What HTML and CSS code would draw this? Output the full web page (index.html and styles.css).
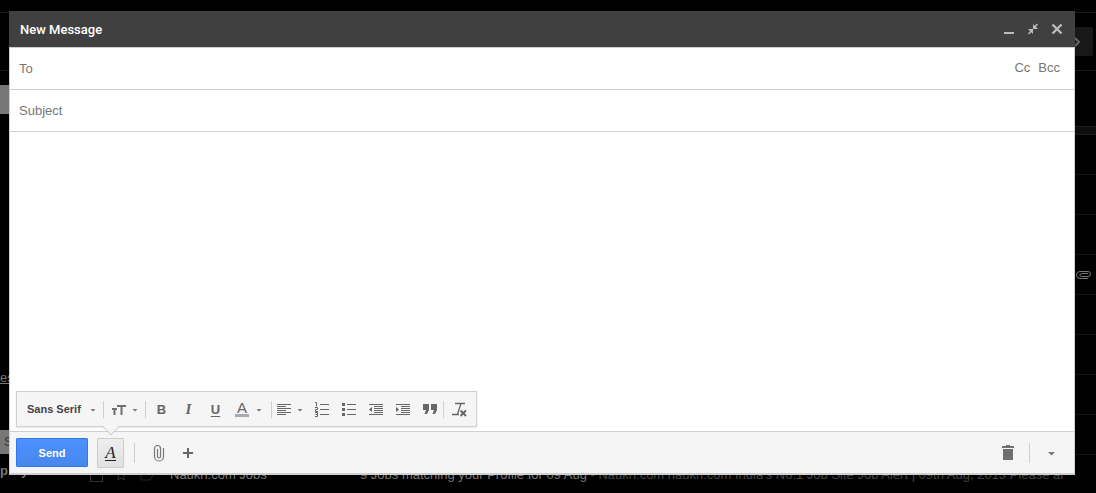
FILE: index.html
```html
<!DOCTYPE html>
<html lang="en">
<head>
    <meta charset="UTF-8">
    <meta name="viewport" content="width=device-width, initial-scale=1.0">
    <title>New Message</title>
    <link rel="stylesheet" href="styles.css">
</head>
<body>

    <!-- Dimmed mailbox behind the dialog -->
    <div class="mailbox" aria-hidden="true">
        <div class="mailbox-bar">
            <span class="pager">
                <svg width="6" height="10" viewBox="0 0 6 10"><path d="M1 1l4 4-4 4" fill="none" stroke="#666" stroke-width="2"/></svg>
            </span>
        </div>
        <div class="mailbox-main">
            <div class="nav">
                <div class="nav-compose"></div>
                <div class="nav-label">es</div>
                <div class="nav-search">S</div>
                <div class="nav-people"><span>p</span><span>y</span></div>
            </div>
            <div class="list">
                <div class="list-head"></div>
                <div class="mail"></div>
                <div class="mail"></div>
                <div class="mail"></div>
                <div class="mail has-file">
                    <svg width="16" height="10" viewBox="0 0 16 10"><path d="M12 8.500H4a3.500 3.500 0 010-7h8a2.500 2.500 0 010 5H5.500a1.500 1.500 0 010-3H12" fill="none" stroke="#777"/></svg>
                </div>
                <div class="mail"></div>
                <div class="mail"></div>
                <div class="mail"></div>
                <div class="mail"></div>
                <div class="mail">
                    <span class="mail-tick"></span>
                    <svg class="mail-star" width="12" height="12" viewBox="0 0 12 12"><path d="M6 1l1.500 3.500 3.500.3-2.700 2.300.9 3.900L6 9l-3.200 2 .9-3.900L1 4.800l3.500-.3z" fill="none" stroke="#333"/></svg>
                    <svg class="mail-flag" width="14" height="12" viewBox="0 0 14 12"><path d="M1 1h9l3 5-3 5H1z" fill="none" stroke="#222"/></svg>
                    <span class="mail-from">Naukri.com Jobs</span>
                    <span class="mail-text"><span class="mail-subject">9 Jobs matching your Profile for 09 Aug</span> - Naukri.com naukri.com India's No.1 Job Site Job Alert | 09th Aug, 2013 Please al</span>
                </div>
            </div>
        </div>
    </div>

    <!-- Compose dialog -->
    <form class="compose">
        <div class="title-bar">
            <h1>New Message</h1>
            <button type="button" class="window-btn" aria-label="Minimize">
                <svg width="12" height="12" viewBox="0 0 12 12"><path d="M1 9h10v2H1z" fill="#bbb"/></svg>
            </button>
            <button type="button" class="window-btn" aria-label="Exit full-screen">
                <svg width="12" height="12" viewBox="0 0 12 12"><path d="M6 1l1.700 1.700L10 .5l1 1-2.200 2.300L11 6H6zM6 11l-1.700-1.700L2 11.500l-1-1 2.200-2.300L1 6h5z" fill="#bbb"/></svg>
            </button>
            <button type="button" class="window-btn" aria-label="Close">
                <svg width="12" height="12" viewBox="0 0 12 12"><path d="M1.500 1.500l9 9M10.500 1.500l-9 9" stroke="#bbb" stroke-width="2.400"/></svg>
            </button>
        </div>

        <div class="content">
            <div class="field">
                <input type="text" placeholder="To" aria-label="To">
                <button type="button" class="copy-btn">Cc</button>
                <button type="button" class="copy-btn">Bcc</button>
            </div>
            <div class="field">
                <input type="text" placeholder="Subject" aria-label="Subject">
            </div>

            <textarea class="message" aria-label="Message body"></textarea>

            <!-- Formatting options -->
            <div class="format-bar">
                <div class="font-pick">
                    <select aria-label="Font">
                        <option>Sans Serif</option>
                    </select>
                    <span class="caret"></span>
                </div>
                <span class="divider"></span>
                <button type="button" class="tool menu" aria-label="Size">
                    <svg width="16" height="16" viewBox="0 0 16 16"><path d="M1 7h5v2H4.500v5h-2V9H1zM6 4h9v2h-3.500v8h-2V6H6z" fill="#707070"/></svg>
                    <span class="caret"></span>
                </button>
                <span class="divider"></span>
                <button type="button" class="tool bold">B</button>
                <button type="button" class="tool italic">I</button>
                <button type="button" class="tool underline">U</button>
                <button type="button" class="tool menu color" aria-label="Text color">
                    <span class="color-letter">A</span>
                    <span class="caret"></span>
                </button>
                <span class="divider"></span>
                <button type="button" class="tool menu align" aria-label="Align">
                    <svg width="16" height="16" viewBox="0 0 16 16"><path d="M1 3h14v1H1zM1 5h9v1H1zM1 7h14v1H1zM1 9h9v1H1zM1 11h14v1H1zM1 13h9v1H1z" fill="#666"/></svg>
                    <span class="caret"></span>
                </button>
                <button type="button" class="tool" aria-label="Numbered list">
                    <svg width="16" height="16" viewBox="0 0 16 16">
                        <path d="M6 3h9v1H6zM6 8h9v1H6zM6 13h9v1H6z" fill="#666"/>
                        <path d="M1 1.500h1.500v4M1 6.500h2.500v2H1.500v2H4M1 11.500h2.500v4H1M1.500 13.500h2" fill="none" stroke="#666"/>
                    </svg>
                </button>
                <button type="button" class="tool" aria-label="Bulleted list">
                    <svg width="16" height="16" viewBox="0 0 16 16"><path d="M6 3h9v1H6zM6 8h9v1H6zM6 13h9v1H6zM1 2h3v3H1zM1 7h3v3H1zM1 12h3v3H1z" fill="#666"/></svg>
                </button>
                <button type="button" class="tool" aria-label="Indent less">
                    <svg width="16" height="16" viewBox="0 0 16 16"><path d="M1 3h14v1H1zM6 5h9v1H6zM6 7h9v1H6zM6 9h9v1H6zM6 11h9v1H6zM1 13h14v1H1zM4 6v5L1 8.500z" fill="#666"/></svg>
                </button>
                <button type="button" class="tool" aria-label="Indent more">
                    <svg width="16" height="16" viewBox="0 0 16 16"><path d="M1 3h14v1H1zM6 5h9v1H6zM6 7h9v1H6zM6 9h9v1H6zM6 11h9v1H6zM1 13h14v1H1zM1 6v5l3-2.500z" fill="#666"/></svg>
                </button>
                <button type="button" class="tool" aria-label="Quote">
                    <svg width="16" height="16" viewBox="0 0 16 16"><path d="M1 3h6v6l-2 4H2.500L4 9H1zM9 3h6v6l-2 4h-2.500L12 9H9z" fill="#666"/></svg>
                </button>
                <span class="divider"></span>
                <button type="button" class="tool clear" aria-label="Remove formatting">
                    <svg width="16" height="16" viewBox="0 0 16 16"><path d="M3 2.500h10M9 2.500L5.500 13M0 13.500h7" fill="none" stroke="#666" stroke-width="1.300"/><path d="M8.500 9.500l5.500 5.500M14 9.500l-5.500 5.500" stroke="#666" stroke-width="1.800"/></svg>
                </button>
            </div>

            <div class="actions">
                <button type="button" class="send">Send</button>
                <button type="button" class="format-toggle" aria-label="Formatting options"><span>A</span></button>
                <span class="divider"></span>
                <button type="button" class="tool" aria-label="Attach files">
                    <svg width="12" height="18" viewBox="0 0 12 18"><path d="M10.500 4v8.500a4.500 4.500 0 01-9 0V4.500a3 3 0 016 0v8a1.500 1.500 0 01-3 0V5" fill="none" stroke="#777" stroke-width="1.200"/></svg>
                </button>
                <button type="button" class="tool" aria-label="Insert">
                    <svg width="12" height="12" viewBox="0 0 12 12"><path d="M5 1h2v4h4v2H7v4H5V7H1V5h4z" fill="#666"/></svg>
                </button>
                <span class="spacer"></span>
                <button type="button" class="tool narrow" aria-label="Discard draft">
                    <svg width="12" height="16" viewBox="0 0 12 16"><path d="M4 0h4v1h4v2H0V1h4zM1 4h10v11H1z" fill="#707070"/></svg>
                </button>
                <span class="divider"></span>
                <button type="button" class="tool narrow" aria-label="More options"><span class="caret large"></span></button>
            </div>
        </div>
    </form>

</body>
</html>
```
FILE: styles.css
```css
* {
    margin: 0;
    padding: 0;
    box-sizing: border-box;
}
body {
    display: flex;
    position: relative;
    min-height: 100vh;
    padding: 11px 21px 18px 9px;
    background: #000;
    font-family: "Liberation Sans", Arial, sans-serif;
    font-size: 13px;
}
button, input, select, textarea {
    border: none;
    outline: none;
    background: none;
    font-family: inherit;
    font-size: 13px;
}
button {
    cursor: pointer;
}
svg {
    display: block;
    flex: none;
}

/* Mailbox */
.mailbox {
    position: absolute;
    inset: 0;
    padding-top: 12px;
    overflow: hidden;
}
.mailbox-bar {
    display: flex;
    justify-content: flex-end;
    align-items: center;
    height: 59px;
    padding-right: 3px;
    border-top: 1px solid #1a1a1a;
    border-bottom: 1px solid #1a1a1a;
}
.pager {
    display: flex;
    align-items: center;
    justify-content: center;
    width: 32px;
    height: 29px;
    border-radius: 2px;
    background: #181818;
}
.mailbox-main {
    display: flex;
}
.nav {
    width: 80px;
    padding-top: 14px;
    color: #777;
}
.nav-compose {
    height: 29px;
    background: #777;
}
.nav-label {
    margin-top: 256px;
    line-height: 16px;
    text-decoration: underline;
}
.nav-search {
    height: 24px;
    margin-top: 44px;
    padding-left: 4px;
    background: #777;
    color: #333;
    line-height: 24px;
}
.nav-people {
    display: flex;
    gap: 13px;
    margin-top: 8px;
    font-weight: bold;
    line-height: 18px;
}
.list {
    flex: 1;
    min-width: 0;
    padding-top: 55px;
}
.list-head {
    height: 9px;
    border-top: 1px solid #1c1c1c;
    border-bottom: 1px solid #1c1c1c;
    background: #0d0d0d;
}
.mail {
    display: flex;
    align-items: center;
    height: 40px;
    padding: 0 10px;
    border-bottom: 1px solid #151515;
    color: #444;
    white-space: nowrap;
}
.has-file {
    justify-content: flex-end;
    padding-right: 4px;
}
.mail-tick {
    width: 13px;
    height: 13px;
    margin-top: 2px;
    border: 1px solid #333;
}
.mail-star {
    margin-left: 12px;
}
.mail-flag {
    margin-left: 13px;
}
.mail-from {
    width: 190px;
    margin-left: 16px;
    color: #777;
}
.mail-text {
    flex: 1;
}
.mail-subject {
    color: #777;
}

/* Dialog */
.compose {
    display: flex;
    flex-direction: column;
    flex: 1;
    min-width: 0;
    position: relative;
    background: #fff;
}
.title-bar {
    display: flex;
    align-items: center;
    gap: 12px;
    height: 36px;
    padding: 0 12px 0 11px;
    background: #404040;
}
.title-bar h1 {
    flex: 1;
    color: #fff;
    font-family: Roboto, sans-serif;
    font-size: 13px;
    font-weight: 500;
}
.window-btn {
    width: 12px;
    height: 12px;
}
.content {
    display: flex;
    flex-direction: column;
    flex: 1;
    border: 1px solid #cfcfcf;
    border-bottom-width: 2px;
}
.field {
    display: flex;
    align-items: center;
    gap: 8px;
    height: 42px;
    padding: 0 14px 0 9px;
    border-bottom: 1px solid #cfcfcf;
}
.field input {
    flex: 1;
    min-width: 0;
    height: 30px;
}
.field input::placeholder {
    color: #777;
}
.copy-btn {
    height: 22px;
    padding-bottom: 2px;
    color: #777;
}
.message {
    flex: 1;
    padding: 9px;
    resize: none;
}

/* Formatting options */
.format-bar {
    display: flex;
    align-items: center;
    align-self: flex-start;
    position: relative;
    height: 36px;
    margin: 0 6px 4px;
    border: 1px solid #cfcfcf;
    background: #f5f5f5;
    box-shadow: 0 1px 2px rgba(0, 0, 0, 0.1);
}
.format-bar::after {
    content: "";
    position: absolute;
    top: 29px;
    left: 88px;
    width: 11px;
    height: 11px;
    border: solid #cfcfcf;
    border-width: 0 1px 1px 0;
    background: linear-gradient(135deg, transparent 50%, #f5f5f5 50%);
    transform: rotate(45deg);
}
.font-pick {
    display: flex;
    align-items: center;
    width: 86px;
    padding-left: 10px;
}
.font-pick select {
    width: 63px;
    height: 28px;
    appearance: none;
    color: #444;
    font-size: 11px;
    font-weight: bold;
}
.divider {
    width: 1px;
    height: 17px;
    background: #cfcfcf;
}
.caret {
    width: 6px;
    height: 3px;
    margin-top: 2px;
    background: #777;
    clip-path: polygon(0 0, 100% 0, 50% 100%);
}
.caret.large {
    width: 8px;
    height: 4px;
}
.tool {
    display: flex;
    align-items: center;
    justify-content: center;
    width: 27px;
    height: 28px;
    color: #666;
}
.menu {
    gap: 5px;
    width: 41px;
}
.bold {
    margin-left: 2px;
    font-weight: bold;
}
.italic {
    font-family: "Liberation Serif", serif;
    font-size: 15px;
    font-style: italic;
    font-weight: bold;
}
.underline {
    font-weight: bold;
    text-decoration: underline;
    text-underline-offset: 2px;
}
.color {
    justify-content: flex-start;
    gap: 7px;
    width: 42px;
    padding-left: 6px;
}
.color-letter {
    width: 14px;
    border-bottom: 3px solid #aaa;
    font-size: 15px;
    line-height: 13px;
}
.align {
    justify-content: flex-start;
    width: 36px;
    padding-left: 4px;
}
.clear {
    width: 32px;
}

/* Bottom bar */
.actions {
    display: flex;
    align-items: center;
    gap: 2px;
    height: 42px;
    padding: 0 11px 0 6px;
    border-top: 1px solid #cfcfcf;
    background: #f5f5f5;
}
.actions .divider {
    height: 20px;
    margin: 0 8px;
}
.send {
    width: 72px;
    height: 29px;
    margin-right: 7px;
    border: 1px solid #3079ed;
    border-radius: 1px;
    background: linear-gradient(#4d90fe, #4787ed);
    color: #fff;
    font-size: 11px;
    font-weight: bold;
}
.format-toggle {
    width: 27px;
    height: 30px;
    border: 1px solid #ccc;
    border-radius: 1px;
    background: linear-gradient(#eee, #e0e0e0);
    color: #222;
    font-family: "Liberation Serif", serif;
    font-size: 17px;
    font-style: italic;
}
.format-toggle span {
    display: block;
    width: 11px;
    margin: 0 auto;
    border-bottom: 1px solid #222;
    line-height: 15px;
}
.narrow {
    width: 23px;
}
.spacer {
    flex: 1;
}
```
